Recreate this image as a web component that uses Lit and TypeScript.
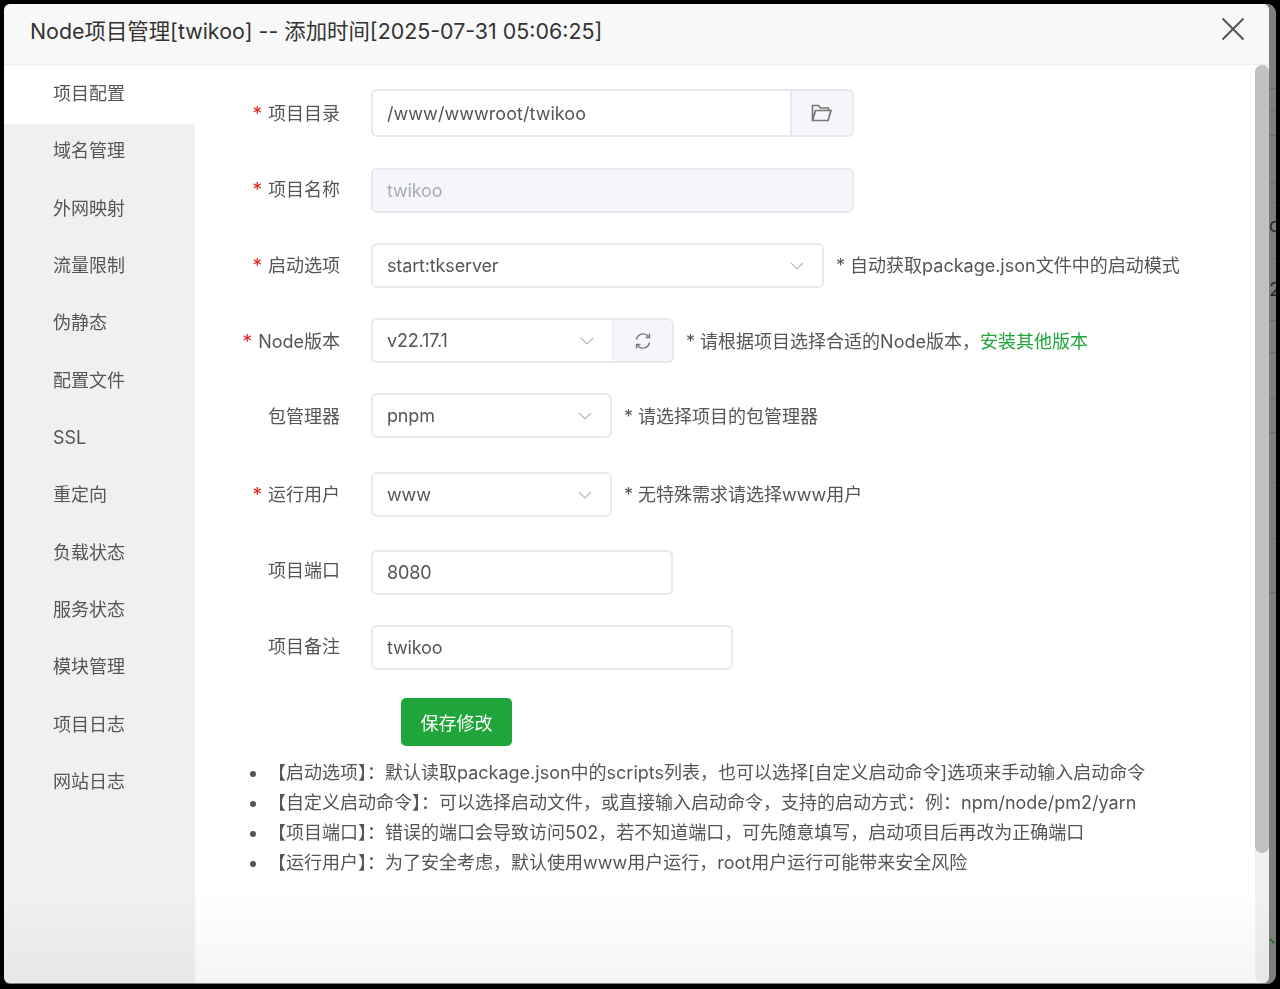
import { LitElement, html, css, svg } from "lit";
import { customElement } from "lit/decorators.js";

const NAV = ["项目配置", "域名管理", "外网映射", "流量限制", "伪静态", "配置文件", "SSL", "重定向", "负载状态", "服务状态", "模块管理", "项目日志", "网站日志"];

const NOTES = [
  "【启动选项】：默认读取package.json中的scripts列表，也可以选择[自定义启动命令]选项来手动输入启动命令",
  "【自定义启动命令】：可以选择启动文件，或直接输入启动命令，支持的启动方式：例：npm/node/pm2/yarn",
  "【项目端口】：错误的端口会导致访问502，若不知道端口，可先随意填写，启动项目后再改为正确端口",
  "【运行用户】：为了安全考虑，默认使用www用户运行，root用户运行可能带来安全风险",
];

// faint rows of the page behind the dialog, seen in the strip on the right
const BEHIND_LINES = [84, 106, 131, 178, 198, 254, 316, 348, 394, 428, 478, 534, 588];

const chevron = svg`<svg class="chev" viewBox="0 0 14 8" width="14" height="8"><path d="M1 1l6 6 6-6" fill="none" stroke="#b4b6bc" stroke-width="1.1"/></svg>`;

@customElement("app-root")
export class AppRoot extends LitElement {
  static styles = css`
    :host {
      display: block;
      height: 989px;
      background: #000;
      box-sizing: border-box;
      padding: 4px 4px 5px 4px;
      font-family: "Inter", "Noto Sans CJK SC", sans-serif;
      color: #555;
      font-size: 18px;
      overflow: hidden;
    }
    * { box-sizing: border-box; }
    .frame {
      position: relative;
      display: flex;
      height: 100%;
      background: #7f7f7f;
      border-radius: 6px 9px 9px 6px;
      padding: 0 7px 1px 0;
      overflow: hidden;
    }
    .behind { position: absolute; top: 0; right: 0; bottom: 0; width: 7px; overflow: hidden; }
    .behind b { position: absolute; left: 0; right: 0; height: 1px; background: #6f6f6f; }
    .behind span { position: absolute; left: 0; font-size: 19px; line-height: 20px; color: #2a2a2a; }
    .behind em { position: absolute; left: 0; top: 936px; width: 6px; height: 2px; background: #1e6b2c; transform: rotate(40deg); }
    .dialog {
      position: relative;
      flex: 1;
      display: flex;
      flex-direction: column;
      background: #fff;
      border-radius: 6px;
      overflow: hidden;
      filter: blur(0.3px);
    }
    .head {
      height: 61px;
      flex: none;
      display: flex;
      align-items: center;
      justify-content: space-between;
      background: #f8f8f8;
      border-bottom: 1px solid #eee;
      padding: 0 24px 10px 26px;
      font-size: 21.4px;
      color: #333;
    }
    .body { flex: 1; display: flex; min-height: 0; }
    .side { width: 191px; flex: none; background: #f0f0f0; }
    .nav {
      height: 57.33px;
      padding: 0 0 3px 49px;
      display: flex;
      align-items: center;
      color: #555;
    }
    .nav.ascii { padding-bottom: 0; }
    .nav.on { background: #fff; box-shadow: 0 2px 0 #fff; }
    .main { flex: 1; padding: 24px 0 0 0; }
    .form { display: flex; flex-direction: column; gap: 30px; }
    .row { display: flex; align-items: center; height: 45px; }
    .row.tall { height: 48px; }
    .row.wide { margin-top: 4px; }
    .row.mid { margin-top: 3px; }
    .row.first { margin-bottom: 1px; }
    .label { width: 145px; flex: none; text-align: right; color: #555; white-space: nowrap; }
    .label i { color: #e02020; font-style: normal; font-size: 19px; line-height: 1; margin-right: 6px; }
    .ctl { margin-left: 31px; display: flex; height: 100%; flex: none; }
    .box {
      height: 100%;
      display: flex;
      align-items: center;
      justify-content: space-between;
      padding: 0 18px 0 14px;
      border: 2px solid #e8e9ee;
      border-radius: 6px;
      background: #fff;
      color: #555;
      letter-spacing: -0.15px;
    }
    .box.path { letter-spacing: 0.05px; }
    .box.dis { background: #f5f6fa; color: #a8abb2; }
    .box.joined { border-radius: 6px 0 0 6px; border-right: 0; }
    .addon {
      height: 100%;
      display: flex;
      align-items: center;
      justify-content: center;
      background: #f5f6fa;
      border: 2px solid #e8e9ee;
      border-radius: 0 6px 6px 0;
    }
    .hint { margin-left: 12px; color: #555; white-space: nowrap; }
    .hint a { color: #20a53a; }
    .btnrow { display: flex; margin: 28px 0 0 206px; }
    .btn {
      width: 111px;
      height: 48px;
      border: 0;
      border-radius: 5px;
      background: #20a53a;
      color: #fff;
      font: inherit;
    }
    ul { margin: 12px 0 0; padding: 0 0 0 73px; list-style: disc; line-height: 30px; white-space: nowrap; }
    .scroll { width: 14px; flex: none; background: #f0f0f0; border-radius: 7px 0 0 7px; }
    .thumb { height: 788px; background: #c1c1c1; border-radius: 7px; }
    .fade {
      position: absolute;
      left: 0;
      right: 0;
      bottom: 0;
      height: 90px;
      background: linear-gradient(to bottom, rgba(0, 0, 0, 0), rgba(0, 0, 0, 0.04));
      pointer-events: none;
    }
  `;

  // lift nudges the label and hint text up, the source rows do not centre them evenly
  private row(label: string, req: boolean, lift: number, ctl: unknown, hint?: unknown, cls = "") {
    const nudge = `padding-bottom:${lift * 2}px`;
    return html`<div class="row ${cls}">
      <div class="label" style=${nudge}>${req ? html`<i>*</i>` : ""}${label}</div>
      <div class="ctl">${ctl}</div>
      ${hint ? html`<div class="hint" style=${nudge}>${hint}</div>` : ""}
    </div>`;
  }

  private select(val: string, w: number, joined = false) {
    return html`<div class="box ${joined ? "joined" : ""}" style="width:${w}px"><span>${val}</span>${chevron}</div>`;
  }

  render() {
    return html`<div class="frame">
      <div class="behind">
        ${BEHIND_LINES.map((y) => html`<b style="top:${y}px"></b>`)}
        <span style="top:212px">c</span>
        <span style="top:276px">2</span>
        <em></em>
      </div>
      <div class="dialog">
        <div class="head">
          <span>Node项目管理[twikoo] -- 添加时间[2025-07-31 05:06:25]</span>
          <svg viewBox="0 0 24 24" width="24" height="24"><path d="M1.500 1.500l21 21M22.500 1.500l-21 21" stroke="#555" stroke-width="2" fill="none"/></svg>
        </div>
        <div class="body">
          <div class="side">
            ${NAV.map((n, i) => html`<div class="nav ${i == 0 ? "on" : ""} ${n == "SSL" ? "ascii" : ""}">${n}</div>`)}
          </div>
          <div class="main">
            <div class="form">
              ${this.row("项目目录", true, 1, html`
                <div class="box joined path" style="width:419px">/www/wwwroot/twikoo</div>
                <div class="addon" style="width:64px">
                  <svg viewBox="0 0 22 20" width="22" height="20"><path d="M1.500 17.500V2.500h6l2 2.500h8v2.500M1.500 17.500h15.500L20 7.500H4.500z" fill="none" stroke="#777" stroke-width="1.700"/></svg>
                </div>`, undefined, "tall first")}
              ${this.row("项目名称", true, 3, html`<div class="box dis" style="width:483px">twikoo</div>`)}
              ${this.row("启动选项", true, 2, this.select("start:tkserver", 453), "* 自动获取package.json文件中的启动模式")}
              ${this.row("Node版本", true, 1, html`
                ${this.select("v22.17.1", 241, true)}
                <div class="addon" style="width:62px;border-left-width:1px">
                  <svg viewBox="0 0 18 18" width="18" height="18"><path d="M2.500 7.500A6.800 6.800 0 0 1 14.500 4.500M15.500 10.500A6.800 6.800 0 0 1 3.500 13.500" fill="none" stroke="#777" stroke-width="1.400"/><path d="M15.500 1.500v4h-4M2.500 16.500v-4h4" fill="none" stroke="#777" stroke-width="1.400"/></svg>
                </div>`, html`* 请根据项目选择合适的Node版本，<a>安装其他版本</a>`)}
              ${this.row("包管理器", false, 1, this.select("pnpm", 241), "* 请选择项目的包管理器")}
              ${this.row("运行用户", true, 2, this.select("www", 241), "* 无特殊需求请选择www用户", "wide")}
              ${this.row("项目端口", false, 4, html`<div class="box" style="width:302px">8080</div>`, undefined, "mid")}
              ${this.row("项目备注", false, 3, html`<div class="box" style="width:362px">twikoo</div>`)}
            </div>
            <div class="btnrow"><button class="btn">保存修改</button></div>
            <ul>${NOTES.map((n) => html`<li>${n}</li>`)}</ul>
          </div>
          <div class="scroll"><div class="thumb"></div></div>
        </div>
        <div class="fade"></div>
      </div>
    </div>`;
  }
}
